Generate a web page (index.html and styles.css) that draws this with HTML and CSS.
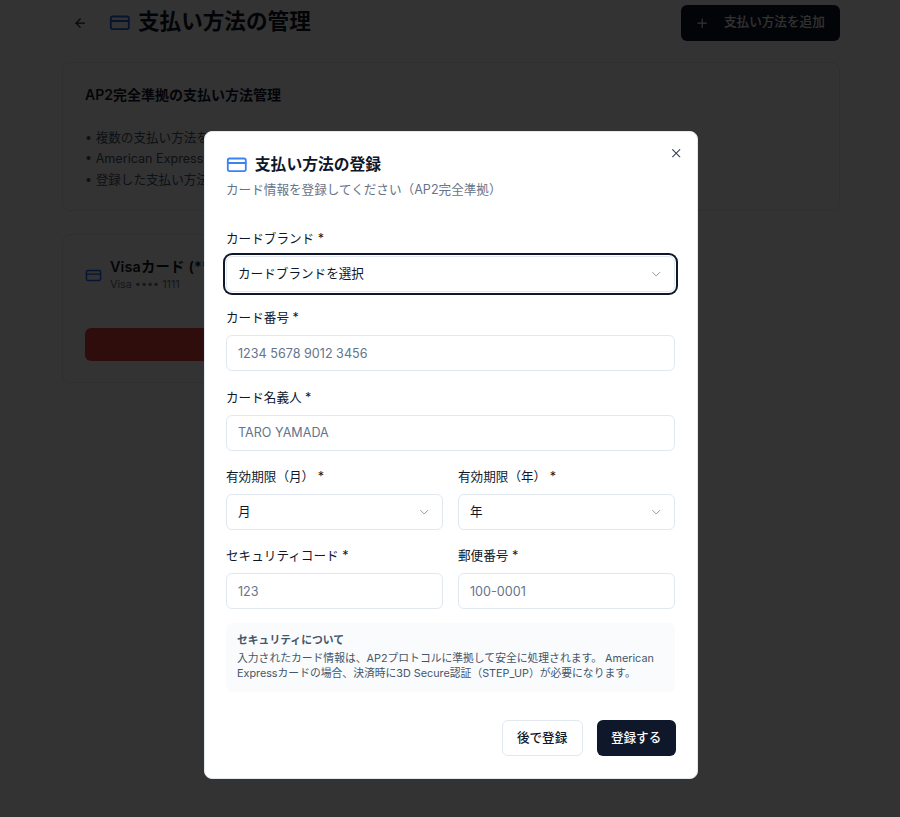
FILE: index.html
```html
<!DOCTYPE html>
<html lang="ja">
<head>
<meta charset="utf-8">
<title>支払い方法の管理</title>
<link rel="stylesheet" href="styles.css">
</head>
<body>
<main class="page">
  <header class="page-header">
    <div class="header-left">
      <svg class="back-icon" viewBox="0 0 24 24"><path d="m12 19-7-7 7-7"/><path d="M19 12H5"/></svg>
      <svg class="title-icon" viewBox="0 0 24 24"><rect x="2" y="5" width="20" height="14" rx="2"/><path d="M2 10h20"/></svg>
      <h1>支払い方法の管理</h1>
    </div>
    <button class="add-btn"><svg viewBox="0 0 24 24"><path d="M5 12h14"/><path d="M12 5v14"/></svg><span>支払い方法を追加</span></button>
  </header>
  <section class="card info-card">
    <h2>AP2完全準拠の支払い方法管理</h2>
    <ul>
      <li>複数の支払い方法を登録して管理できます</li>
      <li>American Expressカードは決済時に認証が必要です</li>
      <li>登録した支払い方法は安全に保管されます</li>
    </ul>
  </section>
  <section class="card method-card">
    <div class="method-head">
      <svg viewBox="0 0 24 24"><rect x="2" y="5" width="20" height="14" rx="2"/><path d="M2 10h20"/></svg>
      <div>
        <div class="method-name">Visaカード (****1111)</div>
        <div class="method-sub">Visa •••• 1111</div>
      </div>
    </div>
    <button class="danger-btn">削除</button>
  </section>
</main>

<div class="overlay">
  <div class="modal">
    <button class="close" aria-label="閉じる"><svg viewBox="0 0 24 24"><path d="M18 6 6 18"/><path d="m6 6 12 12"/></svg></button>
    <div class="modal-title">
      <svg viewBox="0 0 24 24"><rect x="2" y="5" width="20" height="14" rx="2"/><path d="M2 10h20"/></svg>
      <h3>支払い方法の登録</h3>
    </div>
    <p class="modal-desc">カード情報を登録してください（AP2完全準拠）</p>

    <form class="form">
      <div class="field">
        <label>カードブランド *</label>
        <div class="control select focused"><span>カードブランドを選択</span><svg viewBox="0 0 24 24"><path d="m6 9 6 6 6-6"/></svg></div>
      </div>
      <div class="field">
        <label>カード番号 *</label>
        <div class="control placeholder">1234 5678 9012 3456</div>
      </div>
      <div class="field">
        <label>カード名義人 *</label>
        <div class="control placeholder">TARO YAMADA</div>
      </div>
      <div class="two">
        <div class="field">
          <label>有効期限（月） *</label>
          <div class="control select"><span>月</span><svg viewBox="0 0 24 24"><path d="m6 9 6 6 6-6"/></svg></div>
        </div>
        <div class="field">
          <label>有効期限（年） *</label>
          <div class="control select"><span>年</span><svg viewBox="0 0 24 24"><path d="m6 9 6 6 6-6"/></svg></div>
        </div>
      </div>
      <div class="two">
        <div class="field">
          <label>セキュリティコード *</label>
          <div class="control placeholder">123</div>
        </div>
        <div class="field">
          <label>郵便番号 *</label>
          <div class="control placeholder">100-0001</div>
        </div>
      </div>
      <div class="notice">
        <div class="notice-title">セキュリティについて</div>
        <p>入力されたカード情報は、AP2プロトコルに準拠して安全に処理されます。 American Expressカードの場合、決済時に3D Secure認証（STEP_UP）が必要になります。</p>
      </div>
    </form>
    <div class="actions">
      <button class="btn outline">後で登録</button>
      <button class="btn solid">登録する</button>
    </div>
  </div>
</div>
</body>
</html>
```
FILE: styles.css
```css
* { box-sizing: border-box; }
html, body { margin: 0; height: 100%; }
body {
  background: #fff;
  color: #0f172a;
  font-family: Inter, "Noto Sans CJK JP", sans-serif;
  height: 817px;
  overflow: hidden;
}
svg { fill: none; stroke: currentColor; stroke-width: 2; stroke-linecap: round; stroke-linejoin: round; display: block; flex: none; }
button { font: inherit; border: 0; }

.page { width: 778px; margin-left: 62px; padding-top: 5px; }
.page-header { display: flex; justify-content: space-between; align-items: center; height: 36px; margin-bottom: 21px; }
.header-left { display: flex; align-items: center; }
.back-icon { width: 14.4px; height: 14.4px; margin-left: 11px; }
.title-icon { width: 21.6px; height: 21.6px; margin-left: 21.6px; color: #2563eb; }
h1 { margin: -4px 0 0 7.4px; font-size: 21.6px; line-height: 32px; font-weight: 700; }
.add-btn { display: flex; align-items: center; height: 36px; width: 159px; padding-left: 14px; background: #0f172a; color: #f8fafc; border-radius: 6px; font-size: 12.6px; font-weight: 500; }
.add-btn svg { width: 14.4px; height: 14.4px; margin-right: 14.6px; }
.add-btn span { margin-bottom: 5px; }

.card { background: #fff; border: 1px solid #e2e8f0; border-radius: 8px; padding: 21px 22px; }
.info-card { height: 149px; margin-bottom: 23px; }
.info-card h2 { margin: 0 0 21px; font-size: 14px; line-height: 22px; font-weight: 600; }
.info-card ul { margin: 0; padding: 0; list-style: none; color: #475569; font-size: 12.6px; line-height: 21px; }
.info-card li::before { content: "• "; }
.method-card { width: 440px; height: 149px; }
.method-head { display: flex; align-items: center; gap: 8px; height: 40px; margin-top: -1px; }
.method-head svg { width: 17px; height: 17px; color: #2563eb; }
.method-name { font-size: 14.4px; line-height: 18px; font-weight: 600; white-space: nowrap; letter-spacing: .15px; }
.method-sub { font-size: 10.8px; line-height: 14px; margin-top: 2px; color: #64748b; }
.danger-btn { display: block; width: 100%; height: 33px; margin-top: 33px; background: #ef4444; color: #fff; border-radius: 6px; font-size: 12.6px; }

.overlay { position: fixed; inset: 0; background: rgba(0, 0, 0, 0.8); display: flex; justify-content: center; align-items: flex-start; padding: 131px 0 0 2px; }
.modal { position: relative; width: 494px; height: 648px; background: #fff; border: 1px solid #e2e8f0; border-radius: 8px; padding: 22px 22px 0 21px; }
.close { position: absolute; top: 14px; right: 14px; width: 14.4px; height: 14.4px; padding: 0; background: none; color: #334155; }
.close svg { width: 14.4px; height: 14.4px; stroke-width: 1.8; }
.modal-title { display: flex; align-items: center; gap: 7.2px; height: 22px; }
.modal-title svg { width: 21.6px; height: 21.6px; color: #3b82f6; }
h3 { margin: 0; font-size: 15.8px; line-height: 22px; font-weight: 600; }
.modal-desc { margin: 4px 0 0; font-size: 12.6px; line-height: 20px; color: #64748b; }

.form { margin-top: 30px; display: flex; flex-direction: column; gap: 17.3px; }
.field { display: flex; flex-direction: column; gap: 6px; min-width: 0; }
label { font-size: 12.6px; line-height: 17px; font-weight: 400; height: 20px; }
.control { height: 36px; border: 1px solid #e2e8f0; border-radius: 6px; padding: 0 11px; font-size: 12.6px; display: flex; align-items: center; background: #fff; }
.placeholder { color: #64748b; }
.select { justify-content: space-between; }
.select span { margin-bottom: 3px; }
.select svg { width: 14.4px; height: 14.4px; color: #64748b; stroke-width: 1.6; opacity: .75; }
.focused { box-shadow: 0 0 0 1px #fff, 0 0 0 3px #0f172a; }
.two { display: grid; grid-template-columns: 1fr 1fr; gap: 15px; }

.notice { background: #f9fbfd; border-radius: 6px; height: 69px; padding: 10px 11px; margin-top: -3px; font-size: 10.8px; line-height: 15px; color: #475569; }
.notice-title { font-weight: 600; }
.notice p { margin: 3px 0 0; }

.actions { display: flex; justify-content: flex-end; gap: 14px; margin-top: 28px; margin-right: -.6px; }
.btn { height: 36px; border-radius: 6px; padding: 0 0 4px; font-size: 12.6px; font-weight: 500; }
.outline { width: 81px; background: #fff; border: 1px solid #e2e8f0; color: #0f172a; }
.solid { width: 79px; background: #0f172a; color: #f8fafc; }
```
